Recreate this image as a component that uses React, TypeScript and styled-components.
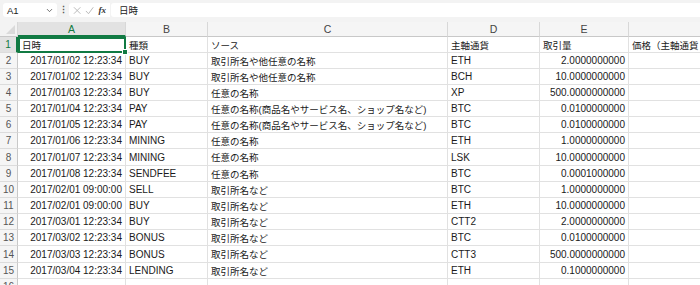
import styled, { createGlobalStyle } from "styled-components";
import { ChevronDown } from "lucide-react";

const GlobalStyle = createGlobalStyle`
	body {
		margin: 0;
		background: #ffffff;
		font-family: "Liberation Sans", "Noto Sans CJK JP", sans-serif;
	}
`;

const Page = styled.div`
	width: 700px;
	height: 285px;
	overflow: hidden;
	background: #f3f3f3;
`;

const FormulaBar = styled.div`
	display: flex;
	align-items: flex-start;
	height: 22px;
	padding: 3px 0 0 3px;
	box-sizing: border-box;
`;

const NameBox = styled.div`
	display: flex;
	align-items: center;
	justify-content: space-between;
	width: 54px;
	height: 14px;
	padding: 0 3px 0 4px;
	box-sizing: border-box;
	background: #fff;
	border-radius: 3px;
	font-size: 9.5px;
	color: #222;
`;

const Dots = styled.div`
	width: 12px;
	display: flex;
	justify-content: center;
	font-size: 9px;
	line-height: 14px;
	color: #555;
	font-weight: 700;
`;

const ActionBox = styled.div`
	display: flex;
	align-items: center;
	gap: 4px;
	width: 41px;
	height: 14px;
	padding: 0 4px;
	box-sizing: border-box;
	background: #fff;
	border-radius: 3px 0 0 3px;
`;

const Fx = styled.span`
	font-family: "Liberation Serif", serif;
	font-style: italic;
	font-weight: 700;
	font-size: 9px;
	color: #333;
`;

const FormulaInput = styled.div`
	flex: 1;
	height: 14px;
	margin-left: 1px;
	padding-left: 8px;
	background: #fff;
	border-radius: 3px 0 0 3px;
	font-size: 9.5px;
	line-height: 14px;
	color: #222;
	font-family: "Noto Sans CJK JP", sans-serif;
`;

const Sheet = styled.div`
	display: grid;
	grid-template-columns: 18px 108px 82px 240px 92px 89px 1fr;
	background: #fff;
`;

const Corner = styled.div`
	position: relative;
	height: 15px;
	background: #f3f3f3;
	border-right: 1px solid #d8d8d8;
	border-bottom: 1px solid #c8c8c8;
	box-sizing: border-box;

	&::after {
		content: "";
		position: absolute;
		right: 2px;
		bottom: 2px;
		border-left: 9px solid transparent;
		border-bottom: 9px solid #dadada;
	}
`;

const ColHead = styled.div<{ $active?: boolean }>`
	height: 15px;
	box-sizing: border-box;
	display: flex;
	align-items: center;
	justify-content: center;
	background: ${(p) => (p.$active ? "#e2e2e2" : "#f5f5f5")};
	border-right: 1px solid #d8d8d8;
	border-bottom: ${(p) => (p.$active ? "2px solid #117a43" : "1px solid #c8c8c8")};
	font-size: 10.5px;
	color: ${(p) => (p.$active ? "#117a43" : "#444")};
`;

const RowHead = styled.div<{ $active?: boolean; $h: number }>`
	height: ${(p) => p.$h}px;
	box-sizing: border-box;
	display: flex;
	align-items: center;
	justify-content: center;
	background: ${(p) => (p.$active ? "#e2e2e2" : "#f5f5f5")};
	border-right: ${(p) => (p.$active ? "2px solid #117a43" : "1px solid #c8c8c8")};
	border-bottom: 1px solid #dcdcdc;
	font-size: 10px;
	color: ${(p) => (p.$active ? "#117a43" : "#555")};
`;

const Cell = styled.div<{ $right?: boolean; $h: number; $jp?: boolean }>`
	height: ${(p) => p.$h}px;
	box-sizing: border-box;
	display: flex;
	align-items: center;
	justify-content: ${(p) => (p.$right ? "flex-end" : "flex-start")};
	padding: 0 3px;
	border-right: 1px solid #e1e1e1;
	border-bottom: 1px solid #e1e1e1;
	font-size: ${(p) => (p.$jp ? "9.5px" : "10px")};
	color: #1a1a1a;
	white-space: nowrap;
`;

const ActiveCell = styled(Cell)`
	position: relative;
	border: 2px solid #117a43;
	padding-left: 2px;

	&::after {
		content: "";
		position: absolute;
		right: -4px;
		bottom: -4px;
		width: 4px;
		height: 4px;
		background: #117a43;
		border: 1px solid #fff;
	}
`;

const head = ["日時", "種類", "ソース", "主軸通貨", "取引量", "価格（主軸通貨"];

const NAME1 = "取引所名や他任意の名称";
const NAME2 = "任意の名称";
const NAME3 = "任意の名称(商品名やサービス名、ショップ名など)";
const NAME4 = "取引所名など";

const rows: string[][] = [
	["2017/01/02 12:23:34", "BUY", NAME1, "ETH", "2.0000000000"],
	["2017/01/02 12:23:34", "BUY", NAME1, "BCH", "10.0000000000"],
	["2017/01/03 12:23:34", "BUY", NAME2, "XP", "500.0000000000"],
	["2017/01/04 12:23:34", "PAY", NAME3, "BTC", "0.0100000000"],
	["2017/01/05 12:23:34", "PAY", NAME3, "BTC", "0.0100000000"],
	["2017/01/06 12:23:34", "MINING", NAME2, "ETH", "1.0000000000"],
	["2017/01/07 12:23:34", "MINING", NAME2, "LSK", "10.0000000000"],
	["2017/01/08 12:23:34", "SENDFEE", NAME2, "BTC", "0.0001000000"],
	["2017/02/01 09:00:00", "SELL", NAME4, "BTC", "1.0000000000"],
	["2017/02/01 09:00:00", "BUY", NAME4, "ETH", "10.0000000000"],
	["2017/03/01 12:23:34", "BUY", NAME4, "CTT2", "2.0000000000"],
	["2017/03/02 12:23:34", "BONUS", NAME4, "BTC", "0.0100000000"],
	["2017/03/03 12:23:34", "BONUS", NAME4, "CTT3", "500.0000000000"],
	["2017/03/04 12:23:34", "LENDING", NAME4, "ETH", "0.1000000000"],
];

// a couple of rows sit one pixel taller, as in the zoomed sheet
const rowHeight = (n: number) => (n === 8 || n === 14 ? 17 : 16);

const App = (): JSX.Element => {
	return (
		<Page>
			<GlobalStyle />
			<FormulaBar>
				<NameBox>
					<span>A1</span>
					<ChevronDown size={9} color="#444" strokeWidth={2} />
				</NameBox>
				<Dots>⋮</Dots>
				<ActionBox>
					<svg width="9" height="9" viewBox="0 0 9 9">
						<path d="M1 1L8 8M8 1L1 8" stroke="#b5b5b5" strokeWidth="1" fill="none" />
					</svg>
					<svg width="10" height="9" viewBox="0 0 10 9">
						<path d="M1 5L3.8 8L9 1" stroke="#b5b5b5" strokeWidth="1" fill="none" />
					</svg>
					<Fx>fx</Fx>
				</ActionBox>
				<FormulaInput>日時</FormulaInput>
			</FormulaBar>
			<Sheet>
				<Corner />
				{["A", "B", "C", "D", "E", ""].map((c, i) => (
					<ColHead key={i} $active={c === "A"}>
						{c}
					</ColHead>
				))}

				<RowHead $active $h={16}>1</RowHead>
				<ActiveCell $h={16} $jp>
					{head[0]}
				</ActiveCell>
				{head.slice(1).map((h) => (
					<Cell key={h} $h={16} $jp>
						{h}
					</Cell>
				))}

				{rows.map((r, i) => {
					const n = i + 2;
					const h = rowHeight(n);
					return [
						<RowHead key={`h${n}`} $h={h}>
							{n}
						</RowHead>,
						<Cell key={`a${n}`} $h={h} $right>
							{r[0]}
						</Cell>,
						<Cell key={`b${n}`} $h={h}>
							{r[1]}
						</Cell>,
						<Cell key={`c${n}`} $h={h} $jp>
							{r[2]}
						</Cell>,
						<Cell key={`d${n}`} $h={h}>
							{r[3]}
						</Cell>,
						<Cell key={`e${n}`} $h={h} $right>
							{r[4]}
						</Cell>,
						<Cell key={`f${n}`} $h={h} />,
					];
				})}

				<RowHead $h={16}>16</RowHead>
				{[0, 1, 2, 3, 4, 5].map((k) => (
					<Cell key={`p${k}`} $h={16} />
				))}
			</Sheet>
		</Page>
	);
};

export default App;
